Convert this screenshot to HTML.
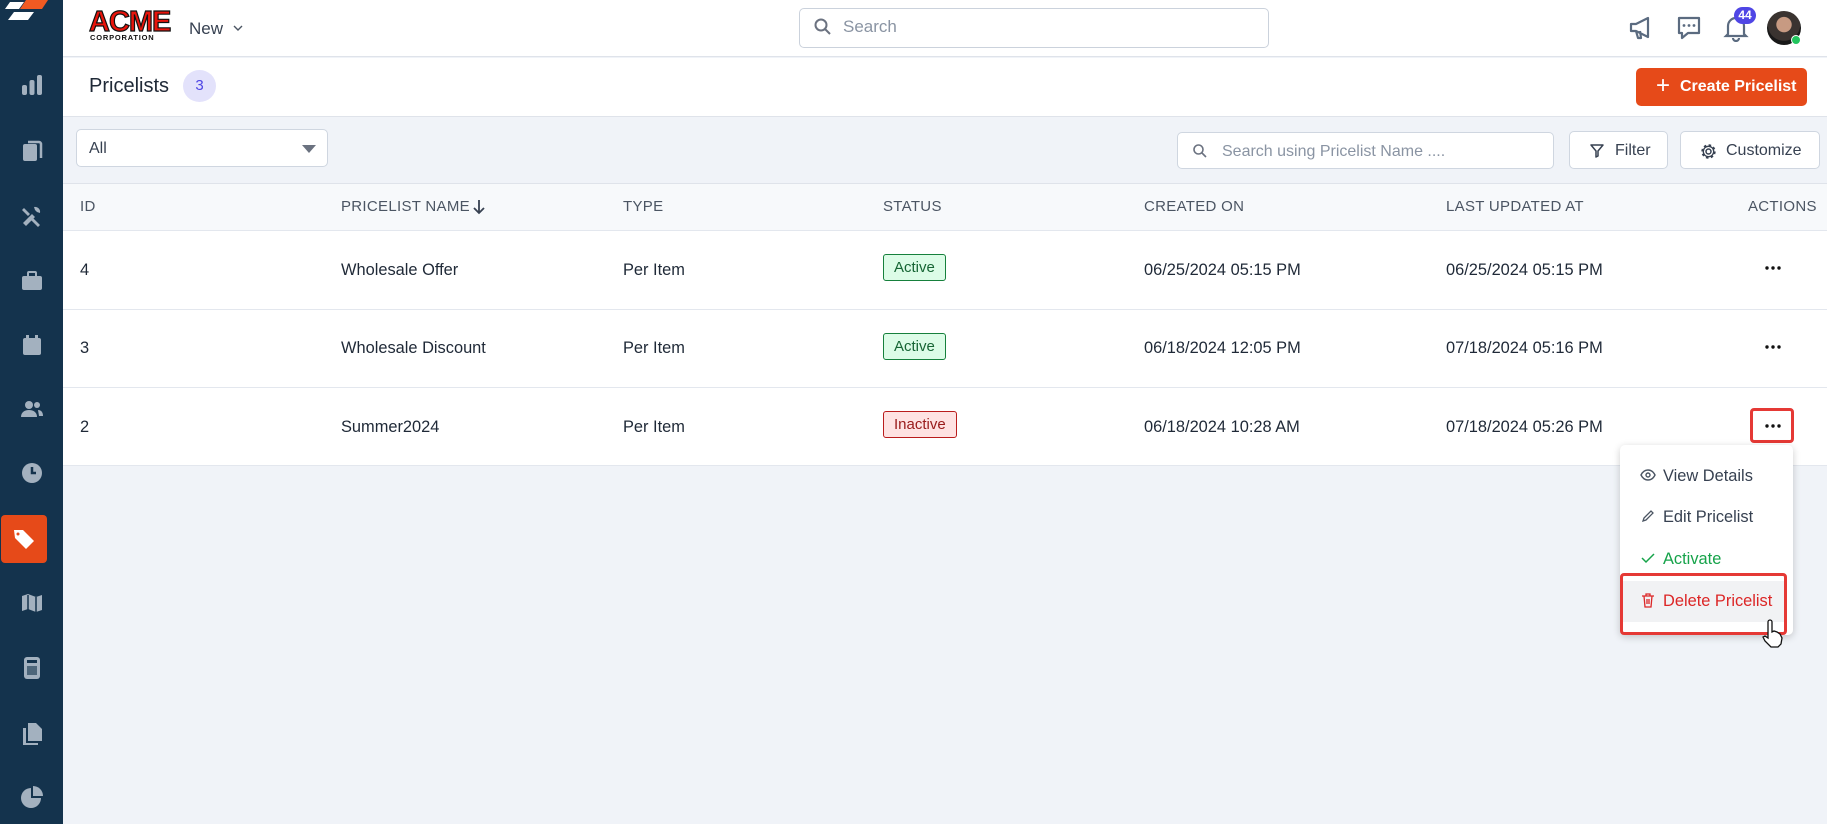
<!DOCTYPE html>
<html><head><style>
*{box-sizing:border-box;margin:0;padding:0}
body{width:1827px;height:824px;overflow:hidden;background:#f0f3f8;font-family:"Liberation Sans",sans-serif;color:#1f2937;position:relative}
.abs{position:absolute}
.side{left:0;top:0;width:63px;height:824px;background:#14334d}
.si{position:absolute;left:20px;width:24px;height:24px;fill:#a3b1bf}
.top{left:63px;top:0;width:1764px;height:57px;background:#fff;border-bottom:1px solid #dfe3ea}
.hdr{left:63px;top:58px;width:1764px;height:59px;background:#fff;border-bottom:1px solid #dfe3ea}
.th{position:absolute;top:198px;font-size:15px;line-height:17px;color:#4b5563;letter-spacing:.3px}
.row{position:absolute;left:63px;width:1764px;border-top:1px solid #e3e7ee}
.cell{position:absolute;font-size:16.4px;color:#1f2937}
.btn{position:absolute;background:#fff;border:1px solid #cfd6e0;border-radius:5px;font-size:16px;color:#374151}
.badge{position:absolute;font-size:15px;padding:4px 10px;border-radius:3px}
.dots{position:absolute;left:1765px}
</style></head><body>
<div class="abs side">
 <svg class="abs" style="left:4px;top:0" width="44" height="32" viewBox="0 0 44 32"><polygon points="22,0 44,0 38,9 16,9" fill="#f05a22"/><polygon points="6,2 20,2 15,9 1,9" fill="#fff"/><polygon points="10,12 30,12 24,20 4,20" fill="#fff"/></svg>
 <svg class="si" style="top:73px" viewBox="0 0 24 24"><rect x="2" y="12" width="5" height="10" rx="2"/><rect x="9.5" y="7" width="5" height="15" rx="2"/><rect x="17" y="2" width="5" height="20" rx="2"/></svg>
 <svg class="si" style="top:138px" viewBox="0 0 24 24"><rect x="3" y="6" width="14" height="17" rx="2"/><path d="M8 4h11a2 2 0 012 2v14" stroke="#a3b1bf" stroke-width="2.5" fill="none"/></svg>
 <svg class="si" style="top:204px" viewBox="0 0 24 24"><path d="M3 19l9-9 3 3-9 9z M14 3a5 5 0 016 6l-3-1-2-2z M4 4l6 6-2 2-6-6z M13 14l7 7-2 2-7-7z"/></svg>
 <svg class="si" style="top:269px" viewBox="0 0 24 24"><rect x="2" y="7" width="20" height="14" rx="2"/><rect x="8" y="3" width="8" height="5" rx="1" fill="none" stroke="#a3b1bf" stroke-width="2"/></svg>
 <svg class="si" style="top:333px" viewBox="0 0 24 24"><rect x="3" y="5" width="18" height="17" rx="2"/><rect x="6" y="2" width="3" height="5"/><rect x="15" y="2" width="3" height="5"/></svg>
 <svg class="si" style="top:397px" viewBox="0 0 24 24"><circle cx="9" cy="8" r="4"/><path d="M1 20c0-5 4-7 8-7s8 2 8 7z"/><circle cx="17" cy="8" r="3"/><path d="M18 13c3 0 5 2 5 6h-4z"/></svg>
 <svg class="si" style="top:461px" viewBox="0 0 24 24"><circle cx="12" cy="12" r="10"/><path d="M12 6v6h4" stroke="#14334d" stroke-width="2.5" fill="none"/></svg>
 <div class="abs" style="left:1px;top:515px;width:46px;height:48px;background:#e64a19;border-radius:4px"></div>
 <svg class="si" style="top:527px;left:12px;fill:#fff" viewBox="0 0 24 24"><path d="M2 3l9 0 11 11-8 8-11-11z"/><circle cx="6" cy="7" r="1.5" fill="#e64a19"/></svg>
 <svg class="si" style="top:591px" viewBox="0 0 24 24"><path d="M2 5l6-2 8 3 6-2v15l-6 2-8-3-6 2z"/><path d="M8 4v16M16 6v16" stroke="#14334d" stroke-width="1.5"/></svg>
 <svg class="si" style="top:656px" viewBox="0 0 24 24"><rect x="4" y="1" width="16" height="22" rx="3"/><rect x="7" y="4" width="10" height="3" fill="#14334d"/><rect x="7" y="10" width="10" height="9" fill="#14334d" opacity=".6"/></svg>
 <svg class="si" style="top:721px" viewBox="0 0 24 24"><path d="M8 2h8l6 6v12H8z"/><path d="M3 7h3v15h12v2H3z"/></svg>
 <svg class="si" style="top:785px" viewBox="0 0 24 24"><path d="M11 3a10 10 0 1010 10H11z"/><path d="M13 1a10 10 0 0110 10H13z"/></svg>
</div>
<div class="abs top">
 <div class="abs" style="left:26px;top:9px;width:80px;font:900 29px/26px 'Liberation Sans',sans-serif;color:#e8140b;letter-spacing:-1px;-webkit-text-stroke:1.2px #111">ACME</div>
 <div class="abs" style="left:27px;top:33px;font:900 7.5px 'Liberation Sans',sans-serif;color:#111;letter-spacing:.8px">CORPORATION</div>
 <div class="abs" style="left:126px;top:19px;font-size:17px;color:#374151">New</div>
 <svg class="abs" style="left:169px;top:22px" width="12" height="12" viewBox="0 0 12 12"><path d="M2 4l4 4 4-4" stroke="#4b5563" stroke-width="1.4" fill="none"/></svg>
 <div class="abs" style="left:736px;top:8px;width:470px;height:40px;border:1px solid #cbd2dc;border-radius:5px"></div>
 <svg class="abs" style="left:750px;top:17px" width="20" height="20" viewBox="0 0 20 20"><circle cx="8" cy="8" r="5.5" stroke="#6b7280" stroke-width="2" fill="none"/><path d="M12 12l5 5" stroke="#6b7280" stroke-width="2"/></svg>
 <div class="abs" style="left:780px;top:17px;font-size:17px;color:#8a94a3">Search</div>
 <svg class="abs" style="left:1564px;top:15px" width="28" height="26" viewBox="0 0 28 26"><path d="M4 9h5l12-6v19l-12-6H4z M9 16l2 7h3l-1-7" stroke="#5b6b80" stroke-width="2.2" fill="none" stroke-linejoin="round"/></svg>
 <svg class="abs" style="left:1612px;top:14px" width="28" height="28" viewBox="0 0 28 28"><path d="M4 4h20v15H13l-6 5v-5H4z" stroke="#5b6b80" stroke-width="2.2" fill="none" stroke-linejoin="round"/><circle cx="9" cy="11.5" r="1.4" fill="#5b6b80"/><circle cx="14" cy="11.5" r="1.4" fill="#5b6b80"/><circle cx="19" cy="11.5" r="1.4" fill="#5b6b80"/></svg>
 <svg class="abs" style="left:1660px;top:14px" width="26" height="28" viewBox="0 0 26 28"><path d="M5 20V12a8 8 0 0116 0v8l2 2H3z M10 24a3 3 0 006 0" stroke="#5b6b80" stroke-width="2.2" fill="none"/></svg>
 <div class="abs" style="left:1671px;top:7px;width:22px;height:17px;border-radius:9px;background:#4f46e5;color:#fff;font:bold 12px/17px 'Liberation Sans';text-align:center">44</div>
 <div class="abs" style="left:1704px;top:11px;width:34px;height:34px;border-radius:50%;background:radial-gradient(circle at 50% 40%,#c79a82 0 28%,#3a3330 30% 60%,#181818 62%)"></div>
 <div class="abs" style="left:1728px;top:35px;width:10px;height:10px;border-radius:50%;background:#22c55e;border:1.5px solid #fff"></div>
</div>
<div class="abs hdr">
 <div class="abs" style="left:26px;top:17px;font-size:20px;color:#1f2937">Pricelists</div>
 <div class="abs" style="left:120px;top:12px;width:33px;height:32px;border-radius:50%;background:#e3e2fb;color:#4f46e5;font-size:15px;line-height:32px;text-align:center">3</div>
 <div class="abs" style="left:1573px;top:10px;width:171px;height:38px;background:#e64a19;border-radius:5px;color:#fff;font-size:16px;font-weight:bold;line-height:38px"><span style="position:absolute;left:20px;font-size:24px;font-weight:normal;top:-1px">+</span><span style="position:absolute;left:44px">Create Pricelist</span></div>
</div>
<div class="btn" style="left:76px;top:129px;width:252px;height:38px"><span style="position:absolute;left:12px;top:10px">All</span><svg style="position:absolute;right:11px;top:15px" width="14" height="8"><path d="M0 0h14L7 8z" fill="#6b7280"/></svg></div>
<div class="btn" style="left:1177px;top:132px;width:377px;height:37px"><svg style="position:absolute;left:14px;top:10px" width="16" height="16" viewBox="0 0 16 16"><circle cx="6.5" cy="6.5" r="4.5" stroke="#6b7280" stroke-width="1.6" fill="none"/><path d="M10 10l4 4" stroke="#6b7280" stroke-width="1.6"/></svg><span style="position:absolute;left:44px;top:10px;color:#8a94a3">Search using Pricelist Name ....</span></div>
<div class="btn" style="left:1569px;top:131px;width:99px;height:38px"><svg style="position:absolute;left:19px;top:11px" width="16" height="16" viewBox="0 0 16 16"><path d="M2 2h12l-5 6v5l-2 1V8z" stroke="#374151" stroke-width="1.5" fill="none" stroke-linejoin="round"/></svg><span style="position:absolute;left:45px;top:10px">Filter</span></div>
<div class="btn" style="left:1680px;top:131px;width:140px;height:38px"><svg style="position:absolute;left:19px;top:11px" width="17" height="17" viewBox="0 0 17 17"><circle cx="8.5" cy="8.5" r="2.5" stroke="#374151" stroke-width="1.5" fill="none"/><circle cx="8.5" cy="8.5" r="6" stroke="#374151" stroke-width="2.4" fill="none" stroke-dasharray="2.4 2.3"/><circle cx="8.5" cy="8.5" r="5.2" stroke="#374151" stroke-width="1.3" fill="none"/></svg><span style="position:absolute;left:45px;top:10px">Customize</span></div>
<div class="abs" style="left:63px;top:183px;width:1764px;height:1px;background:#dfe3ea"></div>
<div class="abs" style="left:63px;top:184px;width:1764px;height:47px;background:#f7f9fb"></div>
<div class="abs" style="left:63px;top:230px;width:1764px;height:236px;background:#fff;border-bottom:1px solid #e3e7ee"></div>
<div class="th" style="left:80px">ID</div>
<div class="th" style="left:341px">PRICELIST NAME</div>
<svg class="abs" style="left:473px;top:199px" width="12" height="16" viewBox="0 0 12 16"><path d="M6 1v13M1 9l5 5 5-5" stroke="#374151" stroke-width="1.8" fill="none"/></svg>
<div class="th" style="left:623px">TYPE</div>
<div class="th" style="left:883px">STATUS</div>
<div class="th" style="left:1144px">CREATED ON</div>
<div class="th" style="left:1446px">LAST UPDATED AT</div>
<div class="th" style="left:1748px">ACTIONS</div>
<div class="row" style="top:230px"></div><div class="row" style="top:309px"></div><div class="row" style="top:387px"></div>

<div class="cell" style="left:80px;top:261px">4</div>
<div class="cell" style="left:341px;top:261px">Wholesale Offer</div>
<div class="cell" style="left:623px;top:261px">Per Item</div>
<div class="badge" style="left:883px;top:254px;background:#dcfce7;border:1px solid #16803c;color:#166534">Active</div>
<div class="cell" style="left:1144px;top:261px">06/25/2024 05:15 PM</div>
<div class="cell" style="left:1446px;top:261px">06/25/2024 05:15 PM</div>
<svg class="dots" style="top:266px" width="16" height="4"><circle cx="2" cy="2" r="1.7" fill="#111"/><circle cx="8" cy="2" r="1.7" fill="#111"/><circle cx="14" cy="2" r="1.7" fill="#111"/></svg>

<div class="cell" style="left:80px;top:339px">3</div>
<div class="cell" style="left:341px;top:339px">Wholesale Discount</div>
<div class="cell" style="left:623px;top:339px">Per Item</div>
<div class="badge" style="left:883px;top:333px;background:#dcfce7;border:1px solid #16803c;color:#166534">Active</div>
<div class="cell" style="left:1144px;top:339px">06/18/2024 12:05 PM</div>
<div class="cell" style="left:1446px;top:339px">07/18/2024 05:16 PM</div>
<svg class="dots" style="top:345px" width="16" height="4"><circle cx="2" cy="2" r="1.7" fill="#111"/><circle cx="8" cy="2" r="1.7" fill="#111"/><circle cx="14" cy="2" r="1.7" fill="#111"/></svg>

<div class="cell" style="left:80px;top:418px">2</div>
<div class="cell" style="left:341px;top:418px">Summer2024</div>
<div class="cell" style="left:623px;top:418px">Per Item</div>
<div class="badge" style="left:883px;top:411px;background:#fee2e2;border:1px solid #b91c1c;color:#991b1b">Inactive</div>
<div class="cell" style="left:1144px;top:418px">06/18/2024 10:28 AM</div>
<div class="cell" style="left:1446px;top:418px">07/18/2024 05:26 PM</div>
<div class="abs" style="left:1750px;top:408px;width:44px;height:35px;border:3px solid #e53935;border-radius:4px"></div>
<svg class="dots" style="top:424px" width="16" height="4"><circle cx="2" cy="2" r="1.7" fill="#111"/><circle cx="8" cy="2" r="1.7" fill="#111"/><circle cx="14" cy="2" r="1.7" fill="#111"/></svg>

<div class="abs" style="left:1620px;top:445px;width:173px;height:190px;background:#fff;border-radius:5px;box-shadow:0 2px 8px rgba(0,0,0,.2)"></div>
<svg class="abs" style="left:1640px;top:469px" width="16" height="12" viewBox="0 0 16 12"><path d="M1 6C3 2 6 1 8 1s5 1 7 5c-2 4-5 5-7 5S3 10 1 6z" stroke="#4b5563" stroke-width="1.4" fill="none"/><circle cx="8" cy="6" r="2" stroke="#4b5563" stroke-width="1.4" fill="none"/></svg>
<div class="cell" style="left:1663px;top:467px;color:#374151">View Details</div>
<svg class="abs" style="left:1641px;top:509px" width="14" height="14" viewBox="0 0 14 14"><path d="M2 12l1-3 7-7 2 2-7 7z" stroke="#4b5563" stroke-width="1.3" fill="none"/></svg>
<div class="cell" style="left:1663px;top:508px;color:#374151">Edit Pricelist</div>
<svg class="abs" style="left:1641px;top:552px" width="14" height="12" viewBox="0 0 14 12"><path d="M1 6l4 4 8-8" stroke="#16a34a" stroke-width="1.5" fill="none"/></svg>
<div class="cell" style="left:1663px;top:550px;color:#16a34a">Activate</div>
<div class="abs" style="left:1623px;top:581px;width:164px;height:41px;background:#f1f2f4"></div>
<div class="abs" style="left:1620px;top:573px;width:167px;height:62px;border:3px solid #e53935;border-radius:4px"></div>
<svg class="abs" style="left:1641px;top:593px" width="14" height="15" viewBox="0 0 14 15"><path d="M1 3h12M5 3V1h4v2M3 3l1 11h6l1-11M6 6v5M8 6v5" stroke="#dc2626" stroke-width="1.3" fill="none"/></svg>
<div class="cell" style="left:1663px;top:592px;color:#dc2626">Delete Pricelist</div>
<svg class="abs" style="left:1762px;top:618px" width="22" height="30" viewBox="0 0 22 30"><path d="M6 20V4a2 2 0 014 0v10l2-1 3 1 3 2 2 4-1 6-3 3H9l-6-6-2-4 2-1z" fill="#fff" stroke="#111" stroke-width="1.3"/></svg>
</body></html>
